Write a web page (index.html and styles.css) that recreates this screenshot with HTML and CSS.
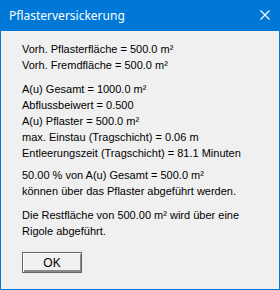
FILE: index.html
```html
<!DOCTYPE html>
<html lang="de">
<head>
    <meta charset="UTF-8">
    <title>Pflasterversickerung</title>
    <link rel="stylesheet" href="styles.css">
</head>
<body>

<div class="window">
    <div class="titlebar">
        <span class="title">Pflasterversickerung</span>
        <svg class="close" width="10" height="10" viewBox="0 0 10 10">
            <path d="M0.5 0.5 L9.5 9.5 M9.5 0.5 L0.5 9.5" stroke="#fff" stroke-width="1.1" fill="none"/>
        </svg>
    </div>
    <div class="content">
        <div class="group">
            <p>Vorh. Pflasterfläche = 500.0 m²</p>
            <p>Vorh. Fremdfläche = 500.0 m²</p>
        </div>
        <div class="group tight">
            <p>A(u) Gesamt = 1000.0 m²</p>
            <p>Abflussbeiwert = 0.500</p>
            <p>A(u) Pflaster = 500.0 m²</p>
            <p>max. Einstau (Tragschicht) = 0.06 m</p>
            <p>Entleerungszeit (Tragschicht) = 81.1 Minuten</p>
        </div>
        <div class="group">
            <p>50.00 % von A(u) Gesamt = 500.0 m²</p>
            <p>können über das Pflaster abgeführt werden.</p>
        </div>
        <div class="group">
            <p>Die Restfläche von 500.00 m² wird über eine</p>
            <p>Rigole abgeführt.</p>
        </div>
        <button class="ok">OK</button>
    </div>
</div>

</body>
</html>
```

FILE: styles.css
```css
html, body {
    margin: 0;
    padding: 0;
}
body {
    width: 280px;
    height: 290px;
    background: #f0f0f0;
}
.window {
    box-sizing: border-box;
    width: 280px;
    height: 290px;
    border: 1px solid #0078d7;
    border-top: none;
    background: #f0f0f0;
}
.titlebar {
    height: 31px;
    background: #0078d7;
    display: flex;
    align-items: center;
    justify-content: space-between;
    padding: 0 10px 0 9px;
    margin: 0 -1px;
}
.title {
    font-family: "Noto Sans", sans-serif;
    font-size: 12px;
    color: #fff;
    margin-top: -1px;
}
.close {
    margin-top: -1px;
}
.content {
    padding: 10px 0 0 21px;
    font-family: "Liberation Sans", Arial, sans-serif;
    font-size: 11px;
    color: #000;
}
.group {
    margin-bottom: 8px;
}
.group.tight {
    margin-bottom: 6px;
}
.group p {
    margin: 0;
    line-height: 16px;
}
.ok {
    display: block;
    width: 60px;
    height: 21px;
    margin-top: 13px;
    padding: 0;
    background: #f0f0f0;
    border: 1px solid #646464;
    box-shadow: inset 1px 1px #fff, inset -1px -2px #8a8a8a;
    font-family: "Liberation Sans", Arial, sans-serif;
    font-size: 12px;
    color: #000;
}
```
